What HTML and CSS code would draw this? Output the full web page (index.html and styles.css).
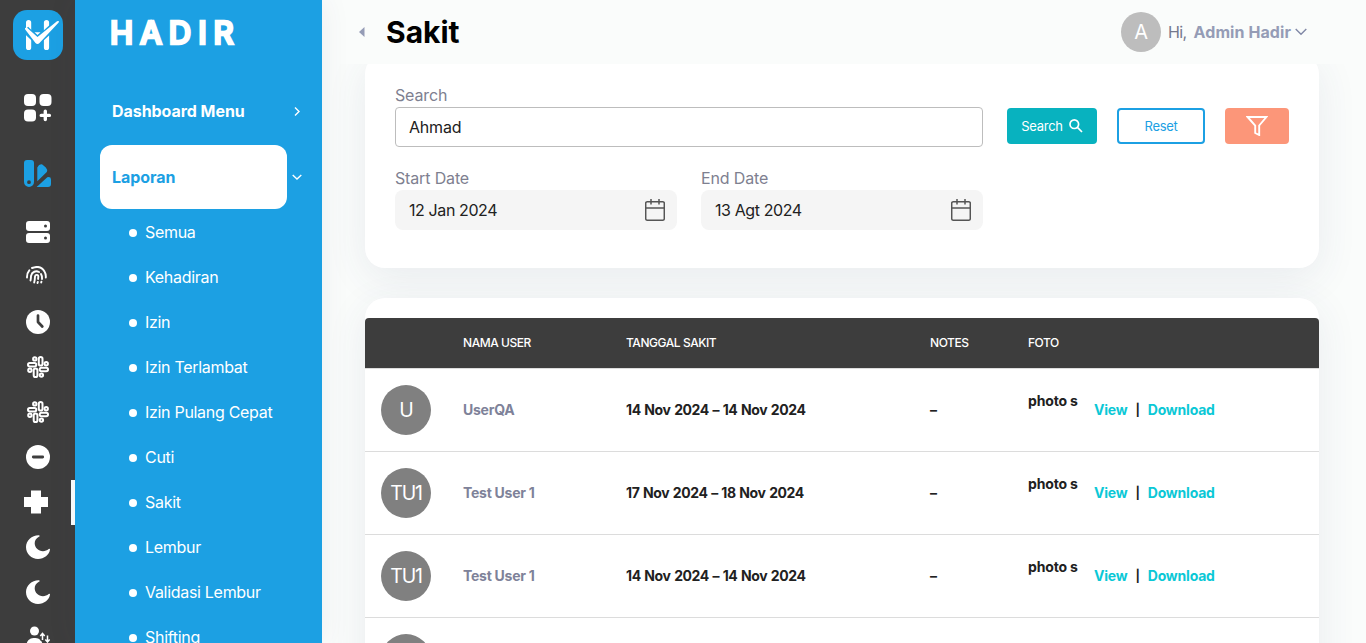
FILE: index.html
```html
<!DOCTYPE html>
<html lang="id">
<head>
<meta charset="utf-8">
<title>Hadir</title>
<link rel="stylesheet" href="styles.css">
</head>
<body>
<svg class="defs" width="0" height="0">
  <symbol id="slack" viewBox="0 0 22 22"><g fill="none" stroke="currentColor" stroke-width="2"><rect x="11.800" y="1" width="3.700" height="8.500" rx="1.850"/><rect x="1" y="6.900" width="8.300" height="3.500" rx="1.750"/><rect x="12.700" y="11.800" width="8.300" height="3.500" rx="1.750"/><rect x="6.700" y="12.500" width="3.700" height="8.500" rx="1.850"/><circle cx="7.800" cy="2.900" r="1.700"/><circle cx="19.200" cy="7.800" r="1.700"/><circle cx="2.900" cy="14.200" r="1.700"/><circle cx="14.400" cy="19.100" r="1.700"/></g></symbol>
  <symbol id="moon" viewBox="0 0 24 24"><path fill="currentColor" d="M12.900.2C6 0 0 5.400 0 12.100 0 18.800 5.400 24 12 24c6.200 0 11.300-4.200 12-9.400.1-.8-.7-1-1.300-.5-1.700 1.400-3.500 2.100-5.700 2.100-4.700 0-8.300-3.500-8.300-7.900 0-2.700 1.400-5 4.500-6.700.7-.4.600-1.300-.3-1.400z"/></symbol>
  <symbol id="calendar" viewBox="0 0 20 22"><path fill="none" stroke="currentColor" stroke-width="1.500" d="M2.200 2.700h15.600q1.500 0 1.500 1.500v15.500q0 1.500-1.500 1.500H2.200q-1.500 0-1.500-1.500V4.200q0-1.500 1.500-1.500zM.7 9h18.600M6 0v5.500M14 0v5.500"/></symbol>
</svg>
<div class="app">
  <nav class="rail">
    <div class="rail-logo">
      <svg width="50" height="50" viewBox="0 0 50 50"><rect width="50" height="50" rx="14" fill="#1ca0e3"/><path d="M15.600 12.500v25M33.500 12.500v25" stroke="#fff" stroke-width="5.200" stroke-linecap="round"/><path d="M21.500 22.300h6l-3 2.700z" fill="#fff"/><path d="M12.500 19.500 24.500 31 45 12.500" fill="none" stroke="#1ca0e3" stroke-width="7.500"/><path d="M13.800 17.600 24.500 27 44 11.200q1.800-.7 2 .3 0 .8-.8 1.500L26.500 33q-2 2-4 0L12.200 19.500q-.8-2 1.600-1.900z" fill="#fff"/></svg>
    </div>
    <div class="rail-slot tall"><svg width="28" height="28" viewBox="0 0 28 28" fill="#fff"><rect width="12" height="12" rx="4"/><rect x="15.500" width="12" height="12" rx="4"/><rect y="15.500" width="12" height="12" rx="4"/><path d="M21.300 17.300v8.200M17.200 21.400h8.200" stroke="#fff" stroke-width="3.400" stroke-linecap="round"/></svg></div>
    <div class="rail-slot tall second"><svg width="28" height="28" viewBox="0 0 28 28" fill="#1ca0e3"><path fill-rule="evenodd" d="M3 0h4q3 0 3 3v19a5 5 0 0 1-10 0V3q0-3 3-3zm2 20.300a1.900 1.900 0 1 0 0 3.800 1.900 1.900 0 0 0 0-3.800z"/><path d="M13.300 7.500q2-4 5-3l3.500 3q2.200 2.300 1 4.500l-9.500 9.200zM14 25.800l9.300-8.600q3.700-.7 3.700 2.300V24q0 3-3 3H13q-1 0 1-1.200z"/></svg></div>
    <div class="rail-slot"><svg width="24" height="22" viewBox="0 0 24 22"><rect width="24" height="10" rx="3" fill="#fff"/><rect y="12" width="24" height="10" rx="3" fill="#fff"/><circle cx="19.500" cy="5" r="1.500" fill="#3d3d3d"/><circle cx="19.500" cy="17" r="1.500" fill="#3d3d3d"/></svg></div>
    <div class="rail-slot shift"><svg width="21" height="19" viewBox="0 0 21 19" fill="none" stroke="#fff" stroke-width="1.900" stroke-linecap="round"><path d="M1 11.500C.9 8.500 1.800 6 3.300 4.300M6 2C11 .1 16 1 18.500 5.500 19.500 7.200 20 9 19.800 11.500M4.500 14.500c.4-1.600.5-3 .5-4.500C6 5.500 10 4.500 13 6M15 8q1.200 2 1 5M8.200 16.500c.6-2 .7-4 .8-6 .4-2.400 3.600-2 3.300.3l-.2 2.200M11.500 17l.3-1M15.200 16.500l.2-.8"/></svg></div>
    <div class="rail-slot"><svg width="24" height="24" viewBox="0 0 24 24"><circle cx="12" cy="12" r="12" fill="#fff"/><path d="M12 5.500V12l4.300 4.500" fill="none" stroke="#3d3d3d" stroke-width="2.700" stroke-linecap="round" stroke-linejoin="round"/></svg></div>
    <div class="rail-slot"><svg width="22" height="22"><use href="#slack"/></svg></div>
    <div class="rail-slot"><svg width="22" height="22"><use href="#slack"/></svg></div>
    <div class="rail-slot"><svg width="24" height="24" viewBox="0 0 24 24"><circle cx="12" cy="12" r="12" fill="#fff"/><path d="M7.300 12h9.400" stroke="#3d3d3d" stroke-width="2.800" stroke-linecap="round"/></svg></div>
    <div class="rail-slot active"><svg width="24" height="24" viewBox="0 0 24 24"><path d="M7 .5h10V7h7v10h-7v6.500H7V17H0V7h7z" fill="#fff"/></svg></div>
    <div class="rail-slot"><svg width="24" height="24"><use href="#moon"/></svg></div>
    <div class="rail-slot"><svg width="24" height="24"><use href="#moon"/></svg></div>
    <div class="rail-slot low"><svg width="24" height="24" viewBox="0 0 24 24" fill="#fff"><circle cx="8.500" cy="5" r="4.500"/><path d="M.5 24v-5a7 7 0 0 1 7-7h2a7 7 0 0 1 7 7v5z"/><path d="M16.500 15V7.500M21.500 9v7.500" fill="none" stroke="#3d3d3d" stroke-width="4"/><path d="M16.500 14V7.500m-2.200 2.500 2.200-2.500 2.200 2.500M21.500 9.500V16m-2.200-2.500 2.200 2.500 2.200-2.500" fill="none" stroke="#fff" stroke-width="1.500"/></svg></div>
  </nav>

  <aside class="menu">
    <div class="brand">HADIR</div>
    <div class="group">
      <div class="group-name dashboard">Dashboard Menu</div>
      <svg width="12" height="12" viewBox="0 0 12 12"><path d="m4 1.500 4 4-4 4"/></svg>
    </div>
    <div class="group open">
      <div class="group-name">Laporan</div>
      <svg width="12" height="12" viewBox="0 0 12 12"><path d="m1.700 4 4.300 4 4.300-4"/></svg>
    </div>
    <ul class="items">
      <li>Semua</li><li>Kehadiran</li><li>Izin</li><li>Izin Terlambat</li><li>Izin Pulang Cepat</li><li>Cuti</li><li>Sakit</li><li>Lembur</li><li>Validasi Lembur</li><li>Shifting</li>
    </ul>
  </aside>

  <main class="main">
    <header class="topbar">
      <svg class="back" width="6" height="10" viewBox="0 0 6 10"><path d="M5.500 0v10L0 5z"/></svg>
      <h1>Sakit</h1>
      <div class="account">
        <div class="account-avatar">A</div>
        <span class="hi">Hi,</span><span class="who">Admin Hadir</span>
        <svg width="12" height="8" viewBox="0 0 12 8"><path d="m.7 1 5.300 5.300L11.300 1"/></svg>
      </div>
    </header>

    <section class="card filters">
      <div class="fields">
        <div class="field wide"><label>Search</label><div class="input">Ahmad</div></div>
        <div class="field"><label>Start Date</label><div class="input date"><span>12 Jan 2024</span><svg width="20" height="22"><use href="#calendar"/></svg></div></div>
        <div class="field"><label>End Date</label><div class="input date"><span>13 Agt 2024</span><svg width="20" height="22"><use href="#calendar"/></svg></div></div>
      </div>
      <div class="actions">
        <div class="btn search">Search<svg width="14" height="14" viewBox="0 0 14 14"><path d="M8.700 8.700 13 13M9.600 5.200a4.300 4.300 0 1 1-8.600 0 4.300 4.300 0 0 1 8.600 0z" fill="none" stroke="#fff" stroke-width="1.700"/></svg></div>
        <div class="btn reset">Reset</div>
        <div class="btn filter"><svg width="22" height="20" viewBox="0 0 22 20"><path d="M1.600 1h18.800L13.200 9.500V19l-4-2V9.500z" fill="none" stroke="#fff" stroke-width="1.900"/></svg></div>
      </div>
    </section>

    <section class="card list">
      <div class="row head"><span></span><span>NAMA USER</span><span>TANGGAL SAKIT</span><span>NOTES</span><span>FOTO</span></div>
      <div class="row"><div class="avatar">U</div><span class="user">UserQA</span><span class="dates">14 Nov 2024 – 14 Nov 2024</span><span>–</span><div class="photo"><span class="thumb">photo s</span><a>View</a><span class="bar">|</span><a>Download</a></div></div>
      <div class="row"><div class="avatar">TU1</div><span class="user">Test User 1</span><span class="dates">17 Nov 2024 – 18 Nov 2024</span><span>–</span><div class="photo"><span class="thumb">photo s</span><a>View</a><span class="bar">|</span><a>Download</a></div></div>
      <div class="row"><div class="avatar">TU1</div><span class="user">Test User 1</span><span class="dates">14 Nov 2024 – 14 Nov 2024</span><span>–</span><div class="photo"><span class="thumb">photo s</span><a>View</a><span class="bar">|</span><a>Download</a></div></div>
      <div class="row"><div class="avatar"></div></div>
    </section>
  </main>
</div>
</body>
</html>
```
FILE: styles.css
```css
* { box-sizing: border-box; }
body {
  margin: 0;
  height: 643px;
  overflow: hidden;
  background: #fafcfb;
  color: #212121;
  font: 16px/24px Inter, "Open Sans", sans-serif;
  letter-spacing: -0.25px;
}
svg { display: block; flex: none; }
.defs { position: absolute; }
.app { display: flex; height: 643px; overflow: hidden; }

/* icon rail */
.rail { width: 75px; flex: none; background: #3d3d3d; color: #fff; z-index: 3; }
.rail-logo { height: 79px; padding: 10px 0 0 13px; }
.rail-slot { height: 45px; display: flex; align-items: center; justify-content: center; padding: 0 0 1px 5px; border-right: 4px solid transparent; }
.rail-slot.tall { height: 66px; padding: 0 0 9px 4px; }
.rail-slot.second { height: 65px; padding-bottom: 8px; }
.rail-slot.shift { padding: 0 0 4px 2px; }
.rail-slot.low { padding-bottom: 0; }
.rail-slot.active { padding-left: 1px; border-right-color: #fff; }

/* blue menu */
.menu { width: 247px; flex: none; background: #1ca0e3; color: #fff; z-index: 3; box-shadow: 0 0 28px rgba(82, 63, 105, .08); }
.brand {
  height: 79px;
  padding: 13px 0 0 35px;
  font-size: 31px;
  line-height: 40px;
  font-weight: 500;
  letter-spacing: 6.900px;
  -webkit-text-stroke: 2.600px #fff;
  stroke-linejoin: round;
}
.group { height: 66px; display: flex; align-items: center; gap: 4px; padding-left: 25px; font-weight: 700; letter-spacing: -0.050px; }
.group svg { fill: none; stroke: #fff; stroke-width: 1.400; }
.group-name { width: 187px; height: 64px; padding-left: 12px; line-height: 65px; border-radius: 12px; }
.dashboard { line-height: 63px; }
.group.open { height: 64px; }
.open .group-name { background: #fff; color: #1ca0e3; }
.items { list-style: none; margin: 0; padding: 0 0 0 54px; }
.items li { height: 45px; display: flex; align-items: center; gap: 8px; letter-spacing: -0.300px; }
.items li::before { content: ""; width: 8px; height: 8px; margin-top: 2px; border-radius: 50%; background: #fff; }

/* content */
.main { flex: 1; min-width: 0; }
.topbar { position: relative; z-index: 2; height: 64px; padding: 0 59px 0 37px; display: flex; align-items: center; background: #fafcfb; }
.back { fill: #959cb6; }
h1 { margin: 0 0 0 21px; font-size: 30px; line-height: 40px; font-weight: 700; color: #000; letter-spacing: 0; }
.account { margin-left: auto; display: flex; align-items: center; }
.account-avatar { width: 40px; height: 40px; margin-right: 7px; border-radius: 50%; background: #bdbdbd; color: #fff; font-size: 20px; line-height: 41px; text-align: center; }
.hi { margin-right: 7px; color: #74788d; letter-spacing: -0.600px; }
.who { margin-right: 4px; font-weight: 700; color: #959cb6; letter-spacing: 0.080px; }
.account svg { fill: none; stroke: #8088a6; stroke-width: 1.400; }

.card { width: 954px; margin-left: 43px; border-radius: 20px; background: #fff; box-shadow: 0 10px 40px rgba(56, 71, 109, .09); }
.filters { height: 214px; margin-top: -10px; padding: 30px; display: flex; gap: 24px; }
.fields { width: 588px; display: grid; grid-template-columns: 282px 282px; column-gap: 24px; row-gap: 20px; align-content: start; }
.wide { grid-column: span 2; }
.field label { display: block; height: 23px; line-height: 22px; color: #7e8090; letter-spacing: -0.150px; }
.input { height: 40px; padding: 0 13px; border: 1px solid #bdbdbd; border-radius: 4px; line-height: 39px; letter-spacing: -0.200px; }
.date { display: flex; justify-content: space-between; align-items: center; padding: 0 12px 0 14px; border: 0; border-radius: 8px; background: #f5f5f5; letter-spacing: -0.400px; }
.date svg { margin-bottom: 1px; color: #555; }
.actions { display: flex; gap: 20px; padding-top: 24px; }
.btn { height: 36px; display: flex; align-items: center; justify-content: center; border-radius: 4px; font-size: 13px; letter-spacing: -0.300px; }
.search { width: 90px; gap: 6px; background: #08b2bf; color: #fff; }
.reset { width: 88px; border: 2px solid #1ca0e3; color: #1ca0e3; }
.filter { width: 64px; background: #fc9679; }

.list { height: 440px; margin-top: 30px; padding-top: 20px; }
.row { height: 83px; display: grid; grid-template-columns: 82px 163px 304px 98px 1fr; align-items: center; padding-left: 16px; border-bottom: 1px solid #dcdcdc; font-size: 14px; font-weight: 700; }
.row.head { height: 51px; border-radius: 4px 4px 0 0; background: #3d3d3d; background-clip: padding-box; color: #fff; font-size: 12px; font-weight: 500; letter-spacing: -0.450px; }
.avatar { width: 50px; height: 50px; border-radius: 50%; background: #808080; color: #fff; font-size: 19.500px; font-weight: 400; letter-spacing: -1.200px; line-height: 50px; text-align: center; }
.user { color: #7e8299; }
.dates { letter-spacing: -0.400px; word-spacing: 0.700px; }
.photo { display: flex; align-items: center; }
.thumb { width: 50px; height: 50px; margin-right: 16px; padding-top: 4px; line-height: 24px; letter-spacing: -0.150px; overflow: hidden; white-space: nowrap; }
.photo a { color: #0bc8d6; letter-spacing: -0.200px; }
.bar { margin: 0 8px; font-size: 12px; }
```
